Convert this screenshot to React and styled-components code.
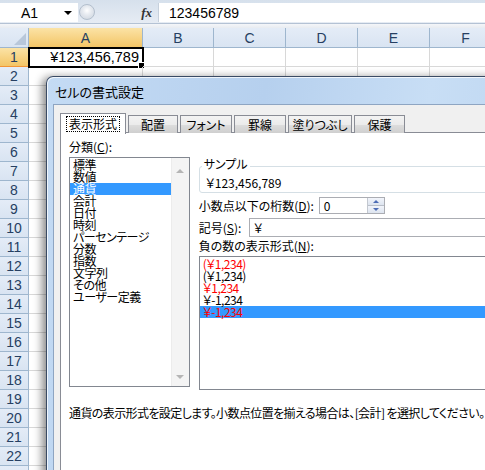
import styled, { createGlobalStyle } from "styled-components";

const GlobalStyle = createGlobalStyle`
  html, body {
    margin: 0;
    padding: 0;
    background: #fff;
  }
  body {
    font-family: "Noto Sans CJK JP", "Liberation Sans", sans-serif;
  }
`;

const JP = `"Noto Sans CJK JP", "Liberation Sans", sans-serif`;
const LATIN = `"Liberation Sans", Arial, sans-serif`;
const COLS = "29px 114px 71px 72px 72px 72px 72px";

const Page = styled.div`
  position: relative;
  width: 485px;
  height: 470px;
  overflow: hidden;
  background: #fff;
`;

/* formula bar */
const FormulaBar = styled.div`
  display: flex;
  height: 24px;
  box-sizing: border-box;
  padding: 3px 0 1px 0;
  background: linear-gradient(#d6e0ec, #e6ecf4);
  border-bottom: 1px solid #b4c2d4;
  font-family: ${LATIN};
  font-size: 14px;
  color: #000;
`;

const NameBox = styled.div`
  width: 78px;
  box-sizing: border-box;
  background: #fff;
  display: flex;
  align-items: center;
  justify-content: space-between;
  padding: 0 6px 0 21px;
`;

const DropArrow = styled.span`
  width: 0;
  height: 0;
  border-left: 4px solid transparent;
  border-right: 4px solid transparent;
  border-top: 4px solid #000;
`;

const Grip = styled.div`
  width: 16px;
  height: 16px;
  margin: 1px 0 0 1px;
  border-radius: 50%;
  border: 1px solid #b3bfcd;
  background: radial-gradient(circle at 50% 40%, #ffffff 0, #e6eaf0 40%, #cbd3dd 100%);
  box-sizing: border-box;
`;

const FxArea = styled.div`
  width: 63px;
  display: flex;
  align-items: center;
  justify-content: flex-end;
  padding-right: 6px;
  box-sizing: border-box;
  font-family: "Liberation Serif", serif;
  font-style: italic;
  font-weight: bold;
  font-size: 13px;
  color: #333;
`;

const FormulaInput = styled.div`
  flex: 1;
  background: #fff;
  border-left: 1px solid #c6d0dc;
  display: flex;
  align-items: center;
  padding-left: 10px;
`;

const Band = styled.div`
  height: 4px;
  background: linear-gradient(#f4f6f9, #e8ecf1);
`;

/* sheet */
const Row = styled.div`
  display: grid;
  grid-template-columns: ${COLS};
  height: ${({ $h }) => $h}px;
`;

const Head = styled.div`
  box-sizing: border-box;
  border-right: 1px solid #9eb6ce;
  border-bottom: 1px solid #9eb6ce;
  background: ${({ $active }) =>
    $active
      ? "linear-gradient(#fbe3a6, #f3c566)"
      : "linear-gradient(#e4ecf7, #d9e4f2)"};
  border-bottom-color: ${({ $active }) => ($active ? "#f29436" : "#9eb6ce")};
  display: flex;
  align-items: center;
  justify-content: center;
  font-family: ${LATIN};
  font-size: 14px;
  color: #263f62;
`;

const Corner = styled(Head)`
  align-items: flex-end;
  justify-content: flex-end;
  padding: 0 2px 2px 0;
`;

const CornerMark = styled.span`
  width: 0;
  height: 0;
  border-left: 12px solid transparent;
  border-bottom: 12px solid #b8c7da;
`;

const Cell = styled.div`
  position: relative;
  box-sizing: border-box;
  border-right: 1px solid #d8d8d8;
  border-bottom: 1px solid #d8d8d8;
  display: flex;
  align-items: center;
  justify-content: flex-end;
  padding-right: 3px;
  font-family: ${LATIN};
  font-size: 14.5px;
  ${({ $selected }) =>
    $selected &&
    `
    outline: 2px solid #000;
    outline-offset: -1px;
    &::after {
      content: "";
      position: absolute;
      right: -3px;
      bottom: -3px;
      width: 5px;
      height: 5px;
      background: #000;
      border: 1px solid #fff;
    }
  `}
`;

/* dialog */
const Dialog = styled.div`
  position: absolute;
  left: 46px;
  top: 76px;
  width: 480px;
  height: 420px;
  box-sizing: border-box;
  border: 1px solid rgba(35, 50, 75, 0.85);
  border-radius: 7px 7px 0 0;
  background: linear-gradient(100deg, #c4dbf4 0%, #b6d0ee 40%, #c8def5 70%, #b9d3ef 100%);
  padding-left: 6px;
  box-shadow: -3px 2px 8px 1px rgba(0, 0, 0, 0.45),
    inset 1px 1px 0 rgba(255, 255, 255, 0.75);
  display: flex;
  flex-direction: column;
  font-family: ${JP};
  font-feature-settings: "palt";
`;

const TitleBar = styled.div`
  height: 27px;
  display: flex;
  align-items: center;
  padding: 2px 0 0 2px;
  box-sizing: border-box;
  font-size: 13px;
  color: #000;
`;

const Client = styled.div`
  flex: 1;
  background: #f0f0f0;
  border-top: 1px solid #8ea5c2;
  border-left: 1px solid #8ea5c2;
  padding: 8px 0 0 6px;
  display: flex;
  flex-direction: column;
`;

const TabStrip = styled.div`
  display: flex;
  align-items: flex-end;
  gap: 2px;
  height: 20px;
`;

const Tab = styled.div`
  width: ${({ $w }) => $w}px;
  height: ${({ $active }) => ($active ? 21 : 18)}px;
  box-sizing: border-box;
  border: 1px solid #898c95;
  border-bottom: none;
  background: ${({ $active }) =>
    $active
      ? "#fff"
      : "linear-gradient(#f3f3f3 0%, #ebebeb 50%, #dddddd 51%, #cfcfcf 100%)"};
  margin-bottom: ${({ $active }) => ($active ? -1 : 0)}px;
  position: relative;
  z-index: ${({ $active }) => ($active ? 1 : 0)};
  display: flex;
  align-items: center;
  justify-content: center;
  font-size: 12px;
  line-height: 12px;
  color: #000;
`;

const FocusText = styled.span`
  border: 1px dotted #000;
  padding: 1px 2px;
`;

const Panel = styled.div`
  flex: 1;
  background: #fff;
  border: 1px solid #898c95;
  border-right: none;
  margin-top: -1px;
  padding: 8px 0 0 8px;
  font-size: 12px;
  line-height: 12px;
  color: #000;
`;

const PanelBody = styled.div`
  display: flex;
  gap: 9px;
`;

const LeftCol = styled.div`
  width: 122px;
  display: flex;
  flex-direction: column;
`;

const Label = styled.div`
  height: 12px;
  white-space: nowrap;
  width: ${({ $w }) => ($w ? `${$w}px` : "auto")};
  flex: none;
`;

const ListBox = styled.div`
  margin-top: ${({ $mt }) => $mt || 0}px;
  height: ${({ $h }) => $h}px;
  box-sizing: border-box;
  border: 1px solid #828790;
  background: #fff;
  display: flex;
`;

const Items = styled.div`
  flex: 1;
  padding-top: 1px;
`;

const Item = styled.div`
  height: 12px;
  line-height: 12px;
  padding-left: 3px;
  white-space: nowrap;
  letter-spacing: -0.5px;
  background: ${({ $selected }) => ($selected ? "#3399ff" : "transparent")};
  color: ${({ $selected, $red }) => ($red ? "#ff0000" : $selected ? "#fff" : "#000")};
`;

const ScrollBar = styled.div`
  width: 17px;
  background: #f4f4f4;
  border-left: 1px solid #ececec;
  display: flex;
  flex-direction: column;
  justify-content: space-between;
`;

const ScrollButton = styled.div`
  height: 17px;
  display: flex;
  align-items: center;
  justify-content: center;
  padding: ${({ $down }) => ($down ? "0 0 1px 0" : "4px 0 0 0")};
  &::before {
    content: "";
    width: 0;
    height: 0;
    border-left: 4px solid transparent;
    border-right: 4px solid transparent;
    ${({ $down }) =>
      $down ? "border-top: 4px solid #b5b5b5;" : "border-bottom: 4px solid #b5b5b5;"}
  }
`;

const RightCol = styled.div`
  width: 330px;
  padding-top: 25px;
  display: flex;
  flex-direction: column;
`;

const Group = styled.div`
  position: relative;
  height: 27px;
  box-sizing: border-box;
  border: 1px solid #d5dfe5;
  border-radius: 3px;
  padding: 10px 0 0 6px;
`;

const Legend = styled.span`
  position: absolute;
  top: -9px;
  left: 2px;
  padding: 0 2px;
  background: #fff;
`;

const FieldRow = styled.div`
  margin-top: ${({ $mt }) => $mt}px;
  height: ${({ $h }) => $h}px;
  display: flex;
  align-items: center;
`;

const InputBox = styled.div`
  width: ${({ $w }) => ($w ? `${$w}px` : "auto")};
  flex: ${({ $w }) => ($w ? "none" : 1)};
  height: 100%;
  box-sizing: border-box;
  border: 1px solid #abadb3;
  background: #fff;
  display: flex;
  align-items: center;
  padding-left: 4px;
`;

const InputText = styled.span`
  flex: 1;
`;

const Spin = styled.div`
  width: 16px;
  height: 100%;
  display: flex;
  flex-direction: column;
  border-left: 1px solid #c3c8d0;
`;

const SpinHalf = styled.div`
  flex: 1;
  display: flex;
  align-items: center;
  justify-content: center;
  background: linear-gradient(#f2f5fb, #dde4ef);
  border-bottom: ${({ $top }) => ($top ? "1px solid #b9bfc9" : "none")};
  &::before {
    content: "";
    width: 0;
    height: 0;
    border-left: 3px solid transparent;
    border-right: 3px solid transparent;
    ${({ $top }) =>
      $top ? "border-bottom: 3px solid #4d6cb5;" : "border-top: 3px solid #4d6cb5;"}
  }
`;

const Description = styled.div`
  margin-top: 17px;
  height: 12px;
  white-space: nowrap;
  letter-spacing: -0.6px;
`;

const categories = [
  "標準",
  "数値",
  "通貨",
  "会計",
  "日付",
  "時刻",
  "パーセンテージ",
  "分数",
  "指数",
  "文字列",
  "その他",
  "ユーザー定義",
];

const negatives = [
  { text: "(￥1,234)", red: true },
  { text: "(￥1,234)" },
  { text: "￥1,234", red: true },
  { text: "￥-1,234" },
  { text: "￥-1,234", red: true, selected: true },
];

const tabs = [
  { name: "表示形式", w: 66, active: true },
  { name: "配置", w: 50 },
  { name: "フォント", w: 52 },
  { name: "罫線", w: 52 },
  { name: "塗りつぶし", w: 64 },
  { name: "保護", w: 51 },
];

const colNames = ["A", "B", "C", "D", "E", "F"];

export default function App() {
  const rows = Array.from({ length: 22 }, (_, i) => i + 1);

  return (
    <Page>
      <GlobalStyle />
      <FormulaBar>
        <NameBox>
          A1
          <DropArrow />
        </NameBox>
        <Grip />
        <FxArea>fx</FxArea>
        <FormulaInput>123456789</FormulaInput>
      </FormulaBar>
      <Band />

      <Row $h={20}>
        <Corner>
          <CornerMark />
        </Corner>
        {colNames.map((c) => (
          <Head key={c} $active={c === "A"}>
            {c}
          </Head>
        ))}
      </Row>
      {rows.map((r) => (
        <Row key={r} $h={19}>
          <Head $active={r === 1}>{r}</Head>
          {colNames.map((c) => (
            <Cell key={c} $selected={r === 1 && c === "A"}>
              {r === 1 && c === "A" ? "¥123,456,789" : ""}
            </Cell>
          ))}
        </Row>
      ))}
      <Row $h={19}>
        <Head />
        {colNames.map((c) => (
          <Cell key={c} />
        ))}
      </Row>

      <Dialog>
        <TitleBar>セルの書式設定</TitleBar>
        <Client>
          <TabStrip>
            {tabs.map((t) => (
              <Tab key={t.name} $w={t.w} $active={t.active}>
                {t.active ? <FocusText>{t.name}</FocusText> : t.name}
              </Tab>
            ))}
          </TabStrip>
          <Panel>
            <PanelBody>
              <LeftCol>
                <Label>
                  分類(<u>C</u>):
                </Label>
                <ListBox $mt={4} $h={230}>
                  <Items>
                    {categories.map((c) => (
                      <Item key={c} $selected={c === "通貨"}>
                        {c}
                      </Item>
                    ))}
                  </Items>
                  <ScrollBar>
                    <ScrollButton />
                    <ScrollButton $down />
                  </ScrollBar>
                </ListBox>
              </LeftCol>

              <RightCol>
                <Group>
                  <Legend>サンプル</Legend>
                  ￥123,456,789
                </Group>
                <FieldRow $mt={4} $h={17}>
                  <Label $w={120}>
                    小数点以下の桁数(<u>D</u>):
                  </Label>
                  <InputBox $w={66}>
                    <InputText>0</InputText>
                    <Spin>
                      <SpinHalf $top />
                      <SpinHalf />
                    </Spin>
                  </InputBox>
                </FieldRow>
                <FieldRow $mt={4} $h={19}>
                  <Label $w={50}>
                    記号(<u>S</u>):
                  </Label>
                  <InputBox>
                    <InputText>￥</InputText>
                  </InputBox>
                </FieldRow>
                <FieldRow $mt={3} $h={12}>
                  <Label>
                    負の数の表示形式(<u>N</u>):
                  </Label>
                </FieldRow>
                <ListBox $mt={4} $h={134}>
                  <Items>
                    {negatives.map((n, i) => (
                      <Item key={i} $red={n.red} $selected={n.selected}>
                        {n.text}
                      </Item>
                    ))}
                  </Items>
                </ListBox>
              </RightCol>
            </PanelBody>
            <Description>
              通貨の表示形式を設定します。小数点位置を揃える場合は、[会計] を選択してください。
            </Description>
          </Panel>
        </Client>
      </Dialog>
    </Page>
  );
}
